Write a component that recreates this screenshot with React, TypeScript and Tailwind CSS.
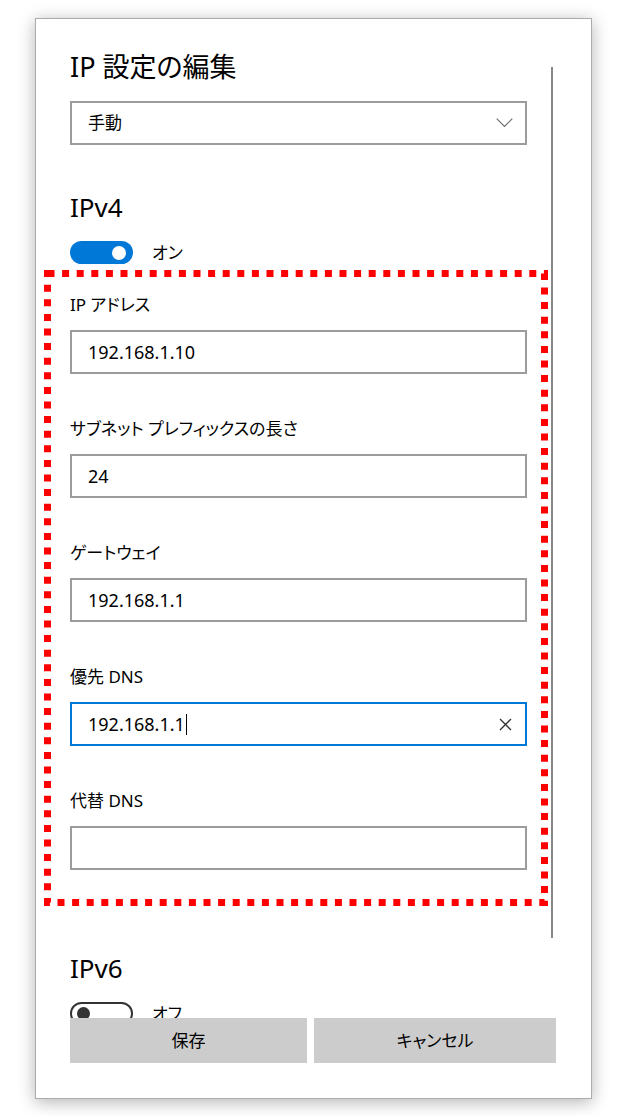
import React from "react";

const font =
  "font-['Noto_Sans','Noto_Sans_CJK_JP',sans-serif] [font-feature-settings:'palt']";

function Field({
  label,
  value,
  focused,
  first,
}: {
  label: string;
  value: string;
  focused?: boolean;
  first?: boolean;
}) {
  return (
    <div className={first ? "" : "mt-[43px]"}>
      <div className="h-[24px] text-[17px] leading-[24px] text-black">{label}</div>
      <div
        className={
          "mt-[13px] flex h-[44px] w-[457px] items-center border-2 bg-white pl-[16px] pr-[13px] " +
          (focused ? "border-[#0078d7]" : "border-[#9c9c9c]")
        }
      >
        <span className="text-[18px] leading-[24px] text-black">{value}</span>
        {focused && <span className="ml-[1px] h-[21px] w-[1px] bg-black" />}
        {focused && (
          <svg className="ml-auto" width="13" height="13" viewBox="0 0 13 13">
            <path d="M1 1 L12 12 M12 1 L1 12" stroke="#333" strokeWidth="1.3" fill="none" />
          </svg>
        )}
      </div>
    </div>
  );
}

export default function App() {
  return (
    <div className={"h-[1116px] w-[617px] overflow-hidden bg-white text-black " + font}>
      <div className="ml-[35px] mt-[18px] flex h-[1081px] w-[557px] flex-col border border-[#ababab] bg-white shadow-[0_3px_16px_rgba(0,0,0,0.3)]">
        <div className="relative h-[999px] overflow-hidden">
          <div className="pl-[34px] pt-[31px]">
            <div className="h-[34px] text-[27px] leading-[34px]">IP 設定の編集</div>

            <div className="mt-[17px] flex h-[44px] w-[457px] items-center justify-between border-2 border-[#9c9c9c] pl-[16px] pr-[12px]">
              <span className="text-[17px] leading-[24px]">手動</span>
              <svg width="17" height="10" viewBox="0 0 17 10">
                <path d="M0.7 0.7 L8.5 8.5 L16.3 0.7" stroke="#6d6d6d" strokeWidth="1.2" fill="none" />
              </svg>
            </div>

            <div className="mt-[45px] h-[34px] text-[26px] leading-[34px]">IPv4</div>

            <div className="mt-[17px] flex h-[23px] items-center">
              <div className="flex h-[23px] w-[63px] items-center justify-end rounded-full bg-[#0078d7] pr-[7px]">
                <div className="h-[14px] w-[14px] rounded-full bg-white" />
              </div>
              <span className="ml-[19px] text-[17px] leading-[24px]">オン</span>
            </div>

            <div className="relative -ml-[26px] mt-[6px] w-[504px] pb-[36px] pl-[26px] pt-[23px]">
              <svg
                className="pointer-events-none absolute left-0 top-0"
                width="504"
                height="636"
                viewBox="0 0 504 636"
              >
                <rect
                  x="3.5"
                  y="3.5"
                  width="497"
                  height="629"
                  fill="none"
                  stroke="#ff0000"
                  strokeWidth="7"
                  strokeDasharray="7 7.6"
                />
              </svg>
              <Field first label="IP アドレス" value="192.168.1.10" />
              <Field label="サブネット プレフィックスの長さ" value="24" />
              <Field label="ゲートウェイ" value="192.168.1.1" />
              <Field label="優先 DNS" value="192.168.1.1" focused />
              <Field label="代替 DNS" value="" />
            </div>

            <div className="mt-[45px] h-[34px] text-[26px] leading-[34px]">IPv6</div>

            <div className="mt-[17px] flex h-[23px] items-center">
              <div className="flex h-[23px] w-[63px] items-center rounded-full border-2 border-[#333] pl-[5px]">
                <div className="h-[13px] w-[13px] rounded-full bg-[#333]" />
              </div>
              <span className="ml-[19px] text-[17px] leading-[24px]">オフ</span>
            </div>
          </div>

          <div className="absolute left-[515px] top-[48px] h-[871px] w-[2px] bg-[#878787]" />
        </div>

        <div className="flex gap-[7px] pl-[34px]">
          <button className="flex h-[45px] w-[237px] items-center justify-center bg-[#cccccc] text-[17px] leading-[24px] text-black">
            保存
          </button>
          <button className="flex h-[45px] w-[242px] items-center justify-center bg-[#cccccc] text-[17px] leading-[24px] text-black">
            キャンセル
          </button>
        </div>
      </div>
    </div>
  );
}
